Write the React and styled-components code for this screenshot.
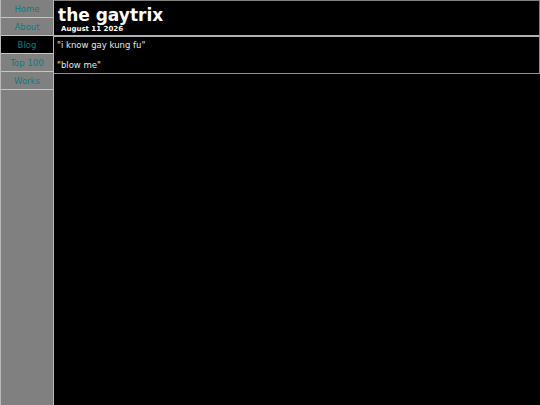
import React from "react";
import styled, { createGlobalStyle } from "styled-components";

const Global = createGlobalStyle`
  html, body { margin: 0; padding: 0; background: #000; }
  body { font-family: "DejaVu Sans", Verdana, sans-serif; }
`;

const Page = styled.div`
  display: flex;
  height: 405px;
  background: #000;
`;

const Sidebar = styled.nav`
  width: 52px;
  flex: none;
  background: #808080;
  border-left: 1px solid #b8b8b8;
  border-right: 1px solid #b8b8b8;
  display: flex;
  flex-direction: column;
`;

const NavItem = styled.a`
  display: flex;
  align-items: center;
  justify-content: center;
  height: 18px;
  padding-top: 1px;
  box-sizing: border-box;
  border-bottom: 1px solid #c4c4c4;
  background: ${(p) => (p.$active ? "#000" : "transparent")};
  color: #008080;
  font-size: 8.5px;
  text-decoration: none;
`;

const Main = styled.main`
  flex: 1;
  display: flex;
  flex-direction: column;
`;

const Header = styled.header`
  border-top: 1px solid #808080;
  border-right: 1px solid #808080;
  border-bottom: 1px solid #b0b0b0;
  padding: 5px 4px 1px 4px;
  color: #fff;
`;

const Title = styled.h1`
  margin: 0;
  font-size: 17px;
  line-height: 18px;
  font-weight: bold;
`;

const DateLine = styled.div`
  margin-top: 1px;
  font-size: 7px;
  line-height: 9px;
  font-weight: bold;
  padding-left: 3px;
`;

const Content = styled.section`
  border-top: 1px solid #b0b0b0;
  border-right: 1px solid #909090;
  border-bottom: 1px solid #909090;
  padding: 3px 3px 2px 3px;
  color: #e8e8e8;
`;

const Quote = styled.p`
  margin: 0;
  font-size: 8.5px;
  line-height: 11px;
  & + & { margin-top: 9px; }
`;

const items = ["Home", "About", "Blog", "Top 100", "Works"];

export default function App() {
  return (
    <>
      <Global />
      <Page>
        <Sidebar>
          {items.map((t) => (
            <NavItem key={t} href="#" $active={t === "Blog"}>
              {t}
            </NavItem>
          ))}
        </Sidebar>
        <Main>
          <Header>
            <Title>the gaytrix</Title>
            <DateLine>August 11 2026</DateLine>
          </Header>
          <Content>
            <Quote>"i know gay kung fu"</Quote>
            <Quote>"blow me"</Quote>
          </Content>
        </Main>
      </Page>
    </>
  );
}
